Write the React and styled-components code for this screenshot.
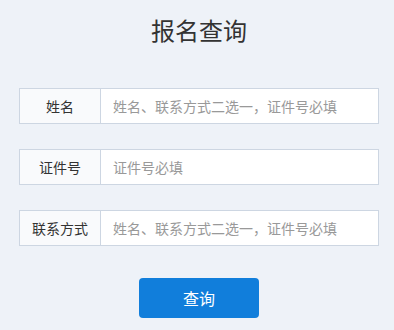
import React from 'react'
import styled, { createGlobalStyle } from 'styled-components'

const GlobalStyle = createGlobalStyle`
    body {
        margin: 0;
        background: #eef2f8;
        font-family: "Noto Sans CJK SC", "Liberation Sans", sans-serif;
    }
`

const Page = styled.div`
    width: 394px;
    height: 330px;
    display: flex;
    flex-direction: column;
    align-items: center;
    box-sizing: border-box;
    padding: 10px 15px 0 19px;
`

const Title = styled.h2`
    margin: 0 0 38px 0;
    font-size: 24px;
    font-weight: 400;
    line-height: 40px;
    color: #333;
`

const Form = styled.form`
    width: 100%;
    display: flex;
    flex-direction: column;
    gap: 25px;
`

const Row = styled.div`
    display: flex;
    height: 36px;
    box-sizing: border-box;
    border: 1px solid #cdd6e2;
    background: #fff;
`

const Label = styled.label`
    width: 80px;
    flex-shrink: 0;
    display: flex;
    align-items: center;
    justify-content: center;
    background: #f9fafc;
    border-right: 1px solid #cdd6e2;
    font-size: 14px;
    color: #333;
`

const Input = styled.input`
    flex: 1;
    min-width: 0;
    border: none;
    outline: none;
    padding: 0 12px;
    font-family: inherit;
    font-size: 14px;
    color: #333;
    background: transparent;
    &::placeholder {
        color: #999;
    }
`

const Button = styled.button`
    margin-top: 32px;
    width: 120px;
    height: 40px;
    border: none;
    border-radius: 4px;
    background: #117edb;
    color: #fff;
    font-family: inherit;
    font-size: 16px;
    cursor: pointer;
`

const fields = [
    { label: '姓名', placeholder: '姓名、联系方式二选一，证件号必填' },
    { label: '证件号', placeholder: '证件号必填' },
    { label: '联系方式', placeholder: '姓名、联系方式二选一，证件号必填' },
]

const App = () => (
    <Page>
        <GlobalStyle />
        <Title>报名查询</Title>
        <Form onSubmit={e => e.preventDefault()}>
            {fields.map(f => (
                <Row key={f.label}>
                    <Label>{f.label}</Label>
                    <Input placeholder={f.placeholder} />
                </Row>
            ))}
        </Form>
        <Button type="button">查询</Button>
    </Page>
)

export default App
